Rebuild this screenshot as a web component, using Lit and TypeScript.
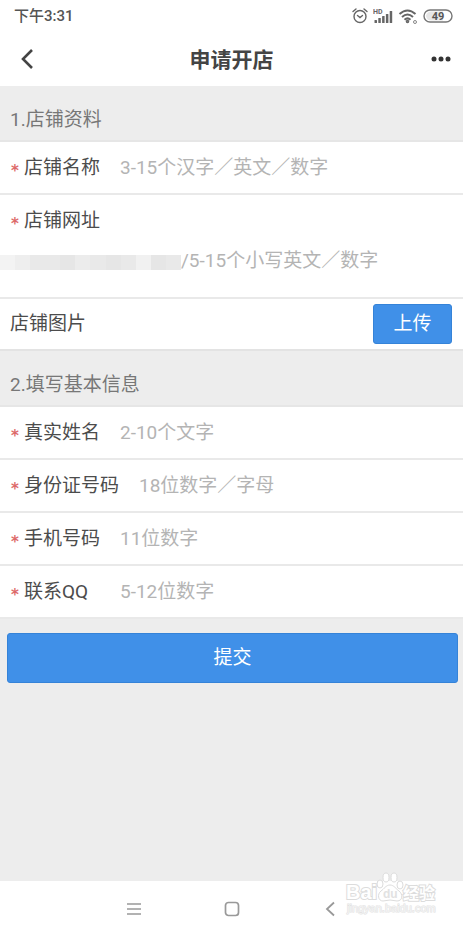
import { LitElement, html, css, svg } from "lit";
import { customElement, property } from "lit/decorators.js";

const FONT = css`Roboto, "Noto Sans CJK SC", sans-serif`;

@customElement("status-bar")
class StatusBar extends LitElement {
  static styles = css`
    :host {
      display: flex;
      align-items: center;
      justify-content: space-between;
      height: 32px;
      padding: 0 10px 0 14px;
      box-sizing: border-box;
      color: #555;
      font: 500 15px/20px ${FONT};
    }
    .icons {
      display: flex;
      align-items: center;
      gap: 5px;
    }
    svg { display: block; }
    .signal { font: 700 7px Roboto, sans-serif; }
    .battery { font: 700 11px Roboto, sans-serif; }
  `;

  render() {
    const bars = [3, 5, 7, 9, 12];
    return html`
      <span>下午3:31</span>
      <div class="icons">
        <svg width="16" height="18" viewBox="0 0 16 18" fill="none" stroke="#666" stroke-width="1.4" stroke-linecap="round">
          <circle cx="8" cy="9.5" r="6" />
          <path d="M1 4.5 4 2M15 4.5 12 2M5.5 8.5 8 10.5 10.5 8.5" />
        </svg>
        <svg class="signal" width="20" height="18" viewBox="0 0 20 18" fill="#666">
          <text x="0" y="7">HD</text>
          ${bars.map((h, i) => svg`<rect x=${1.5 + i * 3.8} y=${16 - h} width="2.5" height=${h} rx="0.5" />`)}
        </svg>
        <svg width="20" height="18" viewBox="0 0 20 18" fill="none" stroke="#666" stroke-width="2">
          <path d="M1.5 7Q9.5 0 17.5 7M4 10Q9.5 5 15 10M6.5 12.7Q9.5 10 12.5 12.7" />
          <circle cx="9.5" cy="14.5" r="0.8" />
          <circle cx="17" cy="15" r="1.5" stroke="#888" stroke-width="1" />
        </svg>
        <svg class="battery" width="30" height="18" viewBox="0 0 30 18">
          <rect x="1" y="3" width="28" height="12" rx="6" fill="#fff" stroke="#777" stroke-width="1.4" />
          <path d="M8 4.5H20V13.5H8Q4 13.5 3 9 4 4.5 8 4.5Z" fill="#e6e6e6" />
          <text x="15" y="13" text-anchor="middle" fill="#555">49</text>
        </svg>
      </div>
    `;
  }
}

@customElement("title-bar")
class TitleBar extends LitElement {
  static styles = css`
    :host {
      display: grid;
      grid-template-columns: 56px 1fr 56px;
      align-items: center;
      height: 54px;
      color: #444;
    }
    h1 {
      margin: 0;
      padding-top: 2px;
      font: 700 21px/30px ${FONT};
      text-align: center;
    }
    button {
      display: flex;
      align-items: center;
      height: 54px;
      padding: 0 12px 0 20px;
      border: 0;
      background: none;
    }
    .more {
      justify-content: flex-end;
      padding: 0 12px;
    }
  `;

  render() {
    return html`
      <button aria-label="返回">
        <svg width="16" height="24" viewBox="0 0 16 24" fill="none" stroke="#444" stroke-width="2.6">
          <path d="M12 3 3 12 12 21" />
        </svg>
      </button>
      <h1>申请开店</h1>
      <button class="more" aria-label="更多">
        <svg width="20" height="6" viewBox="0 0 20 6" fill="#333">
          <circle cx="3" cy="3" r="2.5" /><circle cx="10" cy="3" r="2.5" /><circle cx="17" cy="3" r="2.5" />
        </svg>
      </button>
    `;
  }
}

@customElement("form-field")
class FormField extends LitElement {
  @property() label = "";
  @property() hint = "";
  @property({ type: Boolean, reflect: true }) stacked = false;

  static styles = css`
    :host {
      display: flex;
      align-items: center;
      height: 53px;
      padding: 0 10px;
      box-sizing: border-box;
      border-bottom: 2px solid #e9e9e9;
      font: 19px/28px ${FONT};
      color: #4c4c4c;
    }
    .star {
      width: 14px;
      box-sizing: border-box;
      padding: 6px 0 0 1px;
      font: 700 15px/22px "DejaVu Sans", sans-serif;
      color: #dd6a6a;
    }
    label {
      min-width: 76px;
      margin-right: 20px;
      white-space: nowrap;
    }
    input {
      flex: 1;
      min-width: 0;
      height: 40px;
      padding: 0;
      border: 0;
      outline: 0;
      background: none;
      font: inherit;
      color: inherit;
    }
    input::placeholder { color: #b4b4b4; opacity: 1; }
    :host([stacked]) {
      flex-wrap: wrap;
      align-content: flex-start;
      height: 104px;
      padding: 12px 10px 0;
    }
    .address {
      display: flex;
      align-items: center;
      flex-basis: calc(100% + 10px);
      margin-left: -10px;
      height: 50px;
    }
    .mosaic {
      display: flex;
      width: 181px;
      height: 15px;
      margin-top: 4px;
    }
    .mosaic i { flex: 1; background: #e9e9e9; }
    .mosaic i:nth-child(1) { background: #f3f3f3; }
    .mosaic i:nth-child(2) { background: #eeeeee; }
    .mosaic i:nth-child(3n + 5) { background: #e6e6e6; }
    .mosaic i:nth-child(4n + 6) { background: #ececec; }
    .mosaic i:nth-child(10) { background: #f1f1f1; }
  `;

  render() {
    const input = html`<input id="field" type="text" placeholder=${this.hint} />`;
    return html`
      <span class="star" aria-hidden="true">*</span>
      <label for="field">${this.label}</label>
      ${this.stacked
        ? html`<div class="address">
            <span class="mosaic" aria-hidden="true">${Array.from({ length: 12 }, () => html`<i></i>`)}</span>
            ${input}
          </div>`
        : input}
    `;
  }
}

@customElement("nav-bar")
class NavBar extends LitElement {
  static styles = css`
    :host {
      position: relative;
      display: flex;
      justify-content: center;
      gap: 74px;
      height: 45px;
      background: #fff;
    }
    button {
      display: flex;
      align-items: center;
      justify-content: center;
      width: 24px;
      padding: 10px 0 0;
      border: 0;
      box-sizing: border-box;
      background: none;
    }
    .watermark {
      position: absolute;
      right: 26px;
      bottom: 8px;
      pointer-events: none;
    }
    .watermark svg { display: block; }
    .brand { font: 700 20px "Liberation Sans", "Noto Sans CJK SC", sans-serif; }
    .cn { font-size: 16px; }
    .du { font-size: 12px; }
    .url { font: 11px "Liberation Sans", sans-serif; }
    text { paint-order: stroke; }
  `;

  render() {
    return html`
      <button aria-label="菜单">
        <svg width="14" height="14" viewBox="0 0 14 14" stroke="#999" stroke-width="1.5">
          <path d="M0 2H14M0 7H14M0 12H14" />
        </svg>
      </button>
      <button aria-label="主页">
        <svg width="16" height="16" viewBox="0 0 16 16" fill="none" stroke="#999" stroke-width="1.7">
          <rect x="1.5" y="1.5" width="13" height="13" rx="3" />
        </svg>
      </button>
      <button aria-label="后退">
        <svg width="10" height="16" viewBox="0 0 10 16" fill="none" stroke="#999" stroke-width="1.8">
          <path d="M9 1.5 2 8 9 14.5" />
        </svg>
      </button>
      <div class="watermark">
        <svg width="92" height="46" viewBox="0 0 92 46" fill="#fff" stroke="#dcdcdc" stroke-width="2">
          <g class="brand">
            <g stroke-width="1">
              <ellipse cx="35" cy="12" rx="3" ry="4" />
              <ellipse cx="41" cy="5.5" rx="3" ry="4.5" />
              <ellipse cx="49" cy="5.5" rx="3" ry="4.5" />
              <ellipse cx="55" cy="13" rx="3" ry="4" />
              <path d="M45 13C41 13 39 17 36 19 32 22 33 29 38 29Q45 27 52 29C58 29 58 22 54 19 51 17 49 13 45 13Z" />
            </g>
            <text x="1" y="27">Bai</text>
            <text class="du" x="38" y="26" fill="#e2e2e2" stroke="none">du</text>
            <text class="cn" x="58" y="27">经验</text>
          </g>
          <text class="url" x="2" y="40" fill="#f4f4f4" stroke="#e2e2e2" stroke-width="1">jingyan.baidu.com</text>
        </svg>
      </div>
    `;
  }
}

@customElement("app-root")
class AppRoot extends LitElement {
  static styles = css`
    :host {
      display: flex;
      flex-direction: column;
      min-height: 100vh;
      background: #fff;
      font: 19px/28px ${FONT};
    }
    main {
      flex: 1;
      background: #ededed;
    }
    h2 {
      height: 56px;
      margin: 0;
      padding: 12px 10px 0;
      box-sizing: border-box;
      border-bottom: 2px solid #e6e6e6;
      font: 19px/44px ${FONT};
      color: #777;
    }
    .group { background: #fff; }
    .picture {
      display: flex;
      align-items: center;
      justify-content: space-between;
      height: 52px;
      padding: 0 11px 0 10px;
      box-sizing: border-box;
      border-bottom: 2px solid #e3e3e3;
      color: #4c4c4c;
    }
    .action {
      border: 1px solid #3583d8;
      border-radius: 3px;
      background: #4090e8;
      color: #fff;
      font: 19px/28px ${FONT};
    }
    .upload {
      width: 79px;
      height: 40px;
      padding: 0;
    }
    .submit {
      display: block;
      width: calc(100% - 12px);
      height: 50px;
      margin: 14px 5px 0 7px;
    }
  `;

  render() {
    return html`
      <status-bar></status-bar>
      <title-bar></title-bar>
      <main>
        <h2>1.店铺资料</h2>
        <div class="group">
          <form-field label="店铺名称" hint=${"3-15个汉字\uFF0F英文\uFF0F数字"}></form-field>
          <form-field stacked label="店铺网址" hint=${"/5-15个小写英文\uFF0F数字"}></form-field>
          <div class="picture">
            <span>店铺图片</span>
            <button class="action upload">上传</button>
          </div>
        </div>
        <h2>2.填写基本信息</h2>
        <div class="group">
          <form-field label="真实姓名" hint="2-10个文字"></form-field>
          <form-field label="身份证号码" hint=${"18位数字\uFF0F字母"}></form-field>
          <form-field label="手机号码" hint="11位数字"></form-field>
          <form-field label="联系QQ" hint="5-12位数字"></form-field>
        </div>
        <button class="action submit">提交</button>
      </main>
      <nav-bar></nav-bar>
    `;
  }
}
